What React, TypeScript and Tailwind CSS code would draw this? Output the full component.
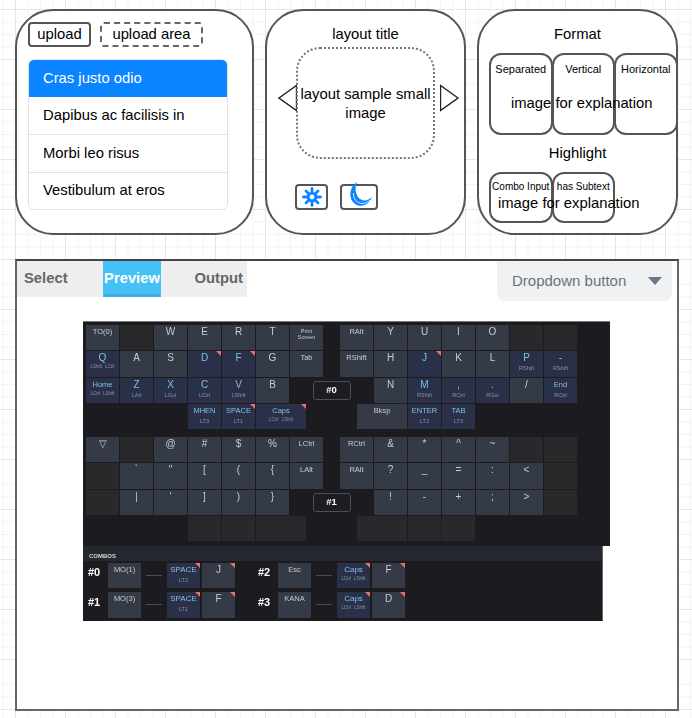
type Key = {
  l?: string;
  s?: string[];
  t?: "k" | "b" | "e";
  c?: boolean;
  wide?: boolean;
  lg?: boolean;
};
type Item = Key | { gap: string } | { enc: string };

const k = (l: string): Key => ({ l, t: "k" });
const b = (l: string, s: string[] = [], c = false, wide = false): Key => ({ l, s, t: "b", c, wide });
const e = (wide = false): Key => ({ t: "e", wide });
const mid: Item = { gap: "w-[15px]" };

const layer0: Item[][] = [
  [k("TO(0)"), e(), k("W"), k("E"), k("R"), k("T"), k("Print\nScreen"), mid, k("RAlt"), k("Y"), k("U"), k("I"), k("O"), e(), e()],
  [b("Q", ["LShift", "LCtrl"]), k("A"), k("S"), b("D", [], true), b("F", [], true), k("G"), k("Tab"), mid, k("RShift"), k("H"), b("J", [], true), k("K"), k("L"), b("P", ["RShift"]), b("-", ["RShift"])],
  [b("Home", ["LCtrl", "LShift"]), b("Z", ["LAlt"]), b("X", ["LGui"]), b("C", ["LCtrl"]), b("V", ["LShift"]), k("B"), { enc: "#0" }, k("N"), b("M", ["RShift"]), b(",", ["RCtrl"]), b(".", ["RGui"]), k("/"), b("End", ["RCtrl"])],
  [{ gap: "w-[101px]" }, b("MHEN", ["LT3"]), b("SPACE", ["LT1"], true), b("Caps", ["LCtrl", "LShift"], true, true), { gap: "w-[49px]" }, { l: "Bksp", t: "k", wide: true }, b("ENTER", ["LT2"]), b("TAB", ["LT3"])],
];

const layer1: Item[][] = [
  [k("▽"), e(), k("@"), k("#"), k("$"), k("%"), k("LCtrl"), mid, k("RCtrl"), k("&"), k("*"), k("^"), k("~"), e(), e()],
  [e(), k("`"), k('"'), k("["), k("("), k("{"), k("LAlt"), mid, k("RAlt"), k("?"), k("_"), k("="), k(":"), k("<"), e()],
  [e(), k("|"), k("'"), k("]"), k(")"), k("}"), { enc: "#1" }, k("!"), k("-"), k("+"), k(";"), k(">"), e()],
  [{ gap: "w-[101px]" }, e(), e(), e(true), { gap: "w-[49px]" }, e(true), e(), e()],
];

function KeyCap({ l, s = [], t = "k", c, wide, lg }: Key) {
  const tone = t === "b" ? "bg-[#2a3047] text-[#7cc0e6]" : t === "e" ? "bg-[#29292c]" : "bg-[#343a46] text-[#c9ccd1]";
  const big = l !== undefined && l.length === 1;
  const multi = l?.includes("\n");
  return (
    <div className={`relative h-[25.3px] shrink-0 text-center ${wide ? "w-[50px]" : "w-[33px]"} ${tone}`}>
      {c && <span className="absolute right-0 top-0 border-l-[5px] border-t-[5px] border-l-transparent border-t-[#f0706c]" />}
      {multi ? (
        <div className="mt-[3px] whitespace-pre text-[5.5px] leading-[6px]">{l}</div>
      ) : (
        <div className={`h-[13px] leading-[13px] ${big ? "text-[10px]" : lg ? "text-[8px]" : "text-[7.5px]"}`}>{l}</div>
      )}
      {s.length === 1 && <div className="mt-px text-[5.5px] leading-[6px] text-[#8b93a3]">{s[0]}</div>}
      {s.length === 2 && (
        <div className="flex justify-center gap-[3px] text-[4.5px] leading-[5px] text-[#8b93a3]">
          <span>{s[0]}</span>
          <span>{s[1]}</span>
        </div>
      )}
    </div>
  );
}

function Layer({ rows }: { rows: Item[][] }) {
  return (
    <div className="flex flex-col gap-y-px">
      {rows.map((row, i) => (
        <div key={i} className="flex gap-px">
          {row.map((item, j) => {
            if ("gap" in item) return <div key={j} className={`shrink-0 ${item.gap}`} />;
            if ("enc" in item)
              return (
                <div key={j} className="flex w-[83px] shrink-0 items-center justify-center">
                  <div className="flex h-[19px] w-[38px] items-center justify-center rounded-[3px] border border-[#484e5c] bg-[#1c1c22] text-[9.5px] font-bold text-white">
                    {item.enc}
                  </div>
                </div>
              );
            return <KeyCap key={j} {...item} />;
          })}
        </div>
      ))}
    </div>
  );
}

function Combo({ id, a, bl, bs, f }: { id: string; a: string; bl: string; bs: string[]; f: string }) {
  return (
    <div className="flex w-[170px] shrink-0 items-center">
      <div className="mb-[6px] w-[20px] text-[11px] font-bold text-white">{id}</div>
      <KeyCap l={a} t="k" />
      <div className="mx-[5px] h-px w-[16px] bg-[#4a4d55]" />
      <KeyCap l={bl} s={bs} t="b" c lg />
      <div className="w-[2px]" />
      <KeyCap l={f} t="k" c />
    </div>
  );
}

function Keyboard() {
  return (
    <div className="ml-[66px] mt-[20px] w-[527px] blur-[0.4px]">
      <div className="h-[225px] border-t border-[#777] bg-[#1b1b20] pl-[3px] pt-[3px]">
        <Layer rows={layer0} />
        <div className="h-[8px]" />
        <Layer rows={layer1} />
      </div>
      <div className="h-[75px] w-[520px] border-r border-[#666] bg-[#1b1b20]">
        <div className="h-[15px] bg-[#26282f] pl-[6px] pt-[6px] text-[6px] font-bold leading-[8px] text-[#d5d7db]">COMBOS</div>
        <div className="flex flex-col gap-[4px] pl-[5px] pt-[2px]">
          <div className="flex">
            <Combo id="#0" a="MO(1)" bl="SPACE" bs={["LT2"]} f="J" />
            <Combo id="#2" a="Esc" bl="Caps" bs={["LCtrl", "LShift"]} f="F" />
          </div>
          <div className="flex">
            <Combo id="#1" a="MO(3)" bl="SPACE" bs={["LT1"]} f="F" />
            <Combo id="#3" a="KANA" bl="Caps" bs={["LCtrl", "LShift"]} f="D" />
          </div>
        </div>
      </div>
    </div>
  );
}

function Tile({ label, small }: { label: string; small?: boolean }) {
  return (
    <div className={`w-[63.5px] shrink-0 rounded-[12px] border-2 border-[#555] text-center ${small ? "h-[51px] pt-[5px] text-[10px]" : "h-[82px] pt-[6px] text-[11px]"}`}>
      {label}
    </div>
  );
}

function SunIcon() {
  return (
    <svg width="20" height="20" viewBox="0 0 20 20" stroke="#0a84ff" fill="none" strokeLinecap="round">
      <circle cx="10" cy="10" r="3.800" strokeWidth="2.800" />
      <path strokeWidth="2.800" d="M10 1.500v3M10 15.500v3M1.500 10h3M15.500 10h3M4 4l2.200 2.200M13.800 13.800L16 16M4 16l2.200-2.200M13.800 6.200L16 4" />
    </svg>
  );
}

function MoonIcon() {
  return (
    <svg width="26" height="28" viewBox="0 0 26 28" className="absolute left-[6px] top-[-6px]">
      <path d="M9 2C1 7 0 19 7 24c6 4 14 1 17-7-5 5-11 4-14 0C7 12 7 7 9 2Z" fill="#0a84ff" />
      <path d="M5.500 13c-.5 6 3.500 10 8.500 10.500 3 0 6-1.500 8-3.500" fill="none" stroke="#fff" strokeWidth="0.8" />
    </svg>
  );
}

export default function App() {
  return (
    <div className="h-[718px] w-[692px] overflow-hidden bg-white bg-[linear-gradient(#e6e6e6_1px,transparent_1px),linear-gradient(90deg,#e6e6e6_1px,transparent_1px),linear-gradient(#f4f4f4_1px,transparent_1px),linear-gradient(90deg,#f4f4f4_1px,transparent_1px)] bg-[size:50px_50px,50px_50px,12.5px_12.5px,12.5px_12.5px] bg-[position:15px_9px] pl-[15px] pt-[9px] font-['Liberation_Sans',sans-serif] text-[14.8px] text-black">
      {/* top row of cards */}
      <div className="flex">
        <div className="h-[226px] w-[239px] shrink-0 rounded-[38px] border-2 border-[#555] bg-white pl-[11px] pt-[11px]">
          <div className="flex gap-[9px]">
            <div className="flex h-[25px] w-[63px] items-center justify-center rounded-[4px] border-2 border-[#555]">upload</div>
            <div className="flex h-[25px] w-[103px] items-center justify-center rounded-[4px] border-2 border-dashed border-[#666]">upload area</div>
          </div>
          <div className="mt-[12px] w-[200px] overflow-hidden rounded-[6px] border border-[#e2e2e2]">
            <div className="flex h-[37px] items-center bg-[#0a84ff] pl-[14px] text-white">Cras justo odio</div>
            <div className="flex h-[38px] items-center border-b border-[#e2e2e2] pl-[14px]">Dapibus ac facilisis in</div>
            <div className="flex h-[38px] items-center border-b border-[#e2e2e2] pl-[14px]">Morbi leo risus</div>
            <div className="flex h-[36px] items-center pb-[2px] pl-[14px]">Vestibulum at eros</div>
          </div>
        </div>

        <div className="ml-[11px] h-[226px] w-[201px] shrink-0 rounded-[38px] border-2 border-[#555] bg-white pt-[14px] text-center">
          <div className="leading-[18px]">layout title</div>
          <div className="mt-[4px] flex pl-[11px]">
            <svg width="19" height="28" viewBox="0 0 19 28" className="mt-[37px] shrink-0">
              <polygon points="1,14 18.500,1.500 18.500,26.500" fill="#fff" stroke="#222" strokeWidth="1.4" />
            </svg>
            <div className="ml-[-1px] h-[112px] w-[139px] shrink-0 rounded-[24px] border-2 border-dotted border-[#777] pt-[36px] leading-[19px]">
              layout sample small image
            </div>
            <svg width="19" height="28" viewBox="0 0 19 28" className="ml-[5px] mt-[37px] shrink-0">
              <polygon points="18,14 .5,1.500 .5,26.500" fill="#fff" stroke="#222" strokeWidth="1.4" />
            </svg>
          </div>
          <div className="ml-[28px] mt-[25px] flex gap-[12px]">
            <div className="flex h-[26px] w-[33px] items-center justify-center rounded-[4px] border-2 border-[#555]">
              <SunIcon />
            </div>
            <div className="relative h-[26px] w-[38px] rounded-[4px] border-2 border-[#555]">
              <MoonIcon />
            </div>
          </div>
        </div>

        <div className="relative ml-[11px] h-[226px] w-[201px] shrink-0 rounded-[38px] border-2 border-[#555] bg-white pt-[14px]">
          <div className="text-center leading-[18px]">Format</div>
          <div className="mt-[10px] flex pl-[10px]">
            <Tile label="Separated" />
            <div className="ml-[-1px]"><Tile label="Vertical" /></div>
            <div className="ml-[-1px]"><Tile label="Horizontal" /></div>
          </div>
          <div className="mt-[9px] text-center leading-[18px]">Highlight</div>
          <div className="mt-[10px] flex pl-[10px]">
            <Tile small label="Combo Input" />
            <div className="ml-[-1px]"><Tile small label="has Subtext" /></div>
          </div>
          <span className="absolute left-[32px] top-[81px] whitespace-nowrap">image for explanation</span>
          <span className="absolute left-[19px] top-[181px] whitespace-nowrap">image for explanation</span>
        </div>
      </div>

      {/* preview panel */}
      <div className="mt-[24px] h-[452px] w-[664px] border-2 border-[#666] border-t-[#444] bg-white">
        <div className="flex items-start justify-between pr-[5px]">
          <div className="flex h-[36px] bg-[#eeeeee] text-[14.8px] font-bold leading-[35px] text-[#666]">
            <div className="w-[86px] pl-[7px]">Select</div>
            <div className="w-[58px] border-b-[3px] border-[#3bb0e6] bg-[#45c1f6] text-center text-white">Preview</div>
            <div className="w-[86px] pr-[4px] text-right">Output</div>
          </div>
          <div className="flex h-[40px] w-[175px] items-center justify-between rounded-b-[8px] bg-[#f0f1f3] pl-[15px] pr-[10px] text-[15px] text-[#6b7280]">
            Dropdown button
            <span className="border-x-[7.5px] border-t-[8px] border-x-transparent border-t-[#6b7686]" />
          </div>
        </div>
        <Keyboard />
      </div>
    </div>
  );
}
